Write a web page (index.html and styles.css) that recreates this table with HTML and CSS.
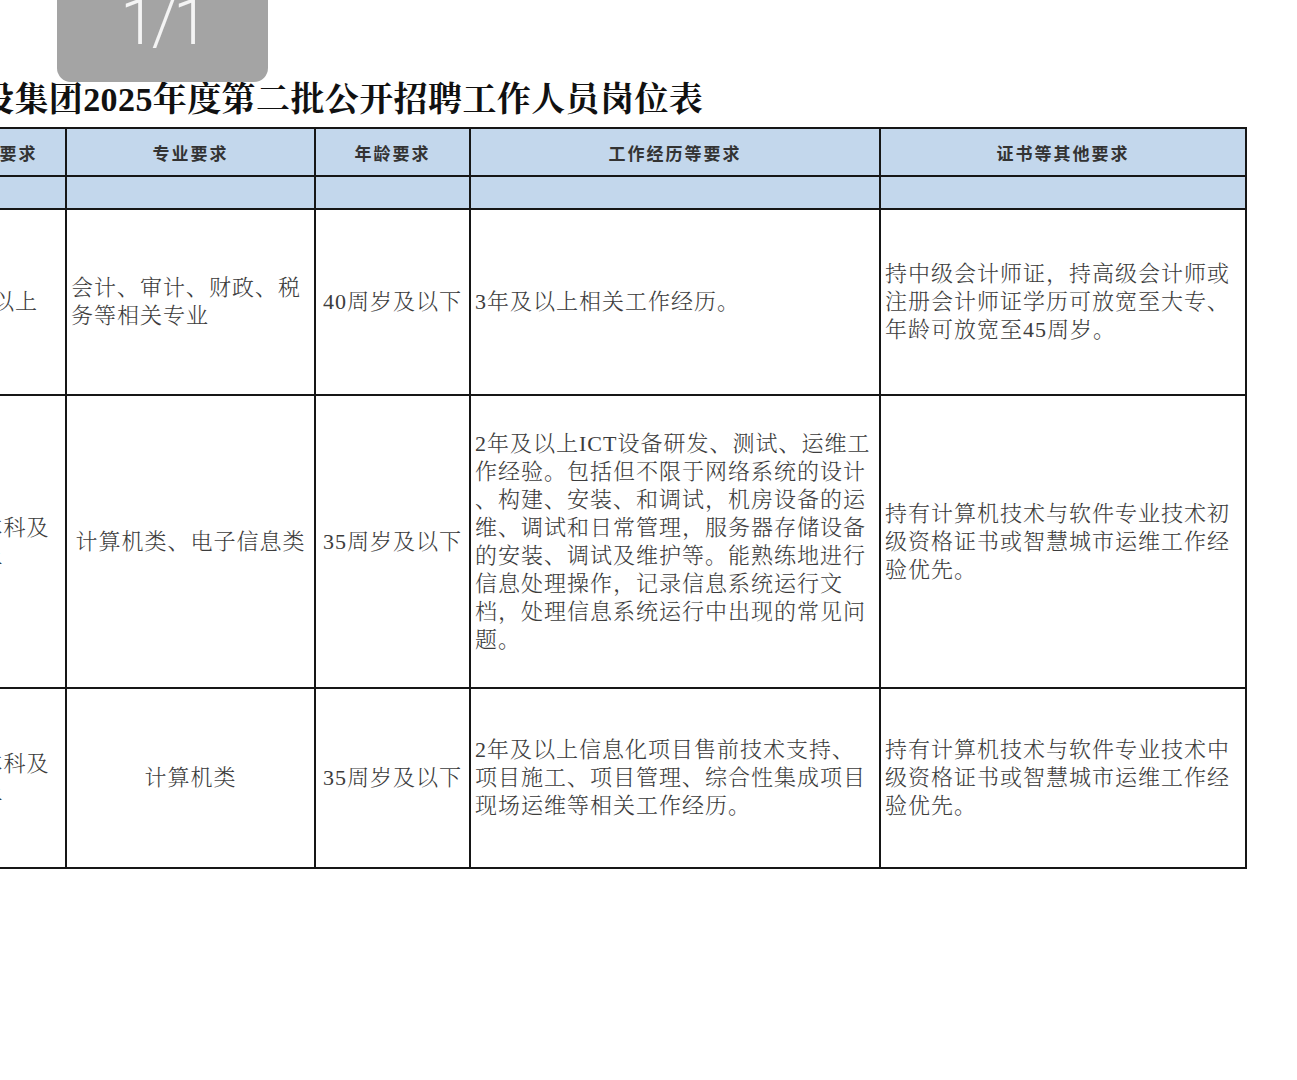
FILE: index.html
```html
<!DOCTYPE html>
<html lang="zh-CN">
<head>
<meta charset="utf-8">
<title>岗位表</title>
<link rel="stylesheet" href="styles.css">
</head>
<body>
<div class="page">
  <div class="pager">1/1</div>
  <h1 class="title">设集团2025年度第二批公开招聘工作人员岗位表</h1>
  <table class="jobs">
    <colgroup>
      <col class="c0"><col class="c1"><col class="c2"><col class="c3"><col class="c4">
    </colgroup>
    <thead>
      <tr class="head">
        <th>学历学位要求</th>
        <th>专业要求</th>
        <th>年龄要求</th>
        <th>工作经历等要求</th>
        <th>证书等其他要求</th>
      </tr>
      <tr class="sub">
        <th></th><th></th><th></th><th></th><th></th>
      </tr>
    </thead>
    <tbody>
      <tr class="r1">
        <td class="center">本科及以上</td>
        <td>会计、审计、财政、税<br>务等相关专业</td>
        <td class="center">40周岁及以下</td>
        <td>3年及以上相关工作经历。</td>
        <td>持中级会计师证，持高级会计师或<br>注册会计师证学历可放宽至大专、<br>年龄可放宽至45周岁。</td>
      </tr>
      <tr class="r2">
        <td class="center">全日制本科及<br>以上</td>
        <td class="center">计算机类、电子信息类</td>
        <td class="center">35周岁及以下</td>
        <td>2年及以上ICT设备研发、测试、运维工<br>作经验。包括但不限于网络系统的设计<br>、构建、安装、和调试，机房设备的运<br>维、调试和日常管理，服务器存储设备<br>的安装、调试及维护等。能熟练地进行<br>信息处理操作，记录信息系统运行文<br>档，处理信息系统运行中出现的常见问<br>题。</td>
        <td>持有计算机技术与软件专业技术初<br>级资格证书或智慧城市运维工作经<br>验优先。</td>
      </tr>
      <tr class="r3">
        <td class="center">全日制本科及<br>以上</td>
        <td class="center">计算机类</td>
        <td class="center">35周岁及以下</td>
        <td>2年及以上信息化项目售前技术支持、<br>项目施工、项目管理、综合性集成项目<br>现场运维等相关工作经历。</td>
        <td>持有计算机技术与软件专业技术中<br>级资格证书或智慧城市运维工作经<br>验优先。</td>
      </tr>
    </tbody>
  </table>
</div>
</body>
</html>
```

FILE: styles.css
```css
html, body {
  margin: 0;
  padding: 0;
  background: #ffffff;
}

.page {
  position: relative;
  width: 1297px;
  height: 1080px;
  overflow: hidden;
  padding-top: 80px;
  box-sizing: border-box;
}

.pager {
  position: absolute;
  left: 57px;
  top: -20px;
  width: 211px;
  height: 102px;
  box-sizing: border-box;
  padding-top: 11px;
  border-radius: 14px;
  background: #a4a4a4;
  color: #f4f4f4;
  font-family: Roboto, "Noto Sans", "Liberation Sans", sans-serif;
  font-weight: 300;
  font-size: 64px;
  line-height: 64px;
  letter-spacing: -4px;
  text-align: center;
}

.title {
  margin: 0 0 7px -20px;
  font-family: "Liberation Serif", "Noto Serif CJK SC", "Noto Sans CJK SC", serif;
  font-weight: 700;
  font-size: 34px;
  line-height: 40px;
  letter-spacing: 0.4px;
  color: #111111;
  white-space: nowrap;
}

.jobs {
  margin-left: -106px;
  width: 1351px;
  table-layout: fixed;
  border-collapse: collapse;
}

.c0 { width: 171px; }
.c1 { width: 249px; }
.c2 { width: 155px; }
.c3 { width: 410px; }
.c4 { width: 366px; }

.jobs th,
.jobs td {
  border: 2px solid #161616;
  padding: 0 4px;
  vertical-align: middle;
  white-space: nowrap;
  overflow: hidden;
}

.jobs th {
  background: #c3d7ec;
  font-family: "Noto Sans CJK SC", "Noto Sans", sans-serif;
  font-weight: 600;
  font-size: 17px;
  letter-spacing: 2px;
  color: #333333;
  text-align: center;
}

.jobs td {
  font-family: "Liberation Serif", "Noto Serif CJK SC", "Noto Sans CJK SC", serif;
  font-weight: 300;
  font-size: 22px;
  line-height: 28px;
  letter-spacing: 1px;
  color: #3c3c3c;
  text-align: left;
}

.jobs td.center {
  text-align: center;
}

.head { height: 48px; }
.sub { height: 33px; }
.r1 { height: 186px; }
.r2 { height: 293px; }
.r3 { height: 180px; }
```
